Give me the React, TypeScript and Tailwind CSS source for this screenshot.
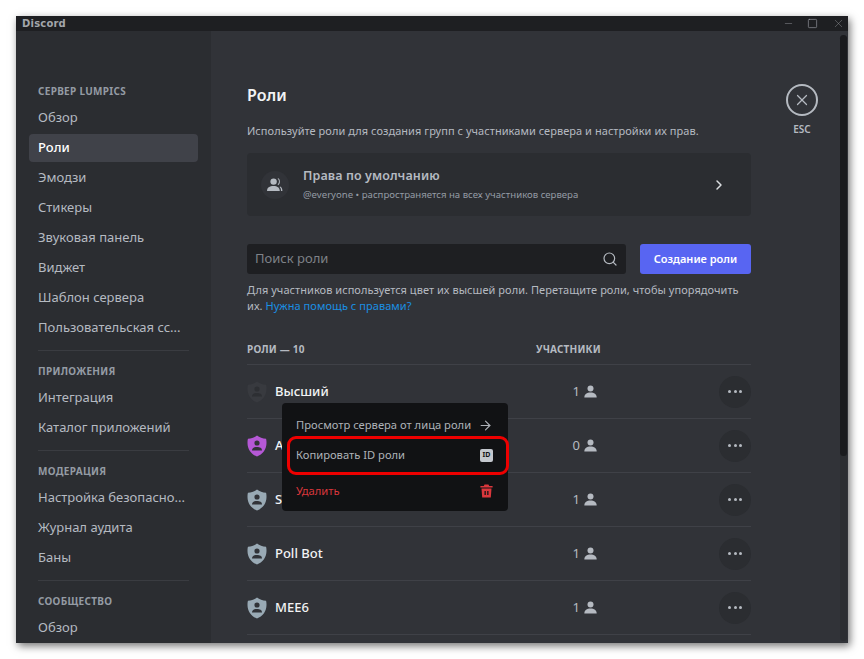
import { ChevronRight, Search, ArrowRight, X, Minus, Square } from 'lucide-react'

const font = { fontFamily: '"Noto Sans", sans-serif' }

const SECTIONS = [
  { title: 'СЕРВЕР LUMPICS', items: ['Обзор', 'Роли', 'Эмодзи', 'Стикеры', 'Звуковая панель', 'Виджет', 'Шаблон сервера', 'Пользовательская сс...'] },
  { title: 'ПРИЛОЖЕНИЯ', items: ['Интеграция', 'Каталог приложений'] },
  { title: 'МОДЕРАЦИЯ', items: ['Настройка безопасно...', 'Журнал аудита', 'Баны'] },
  { title: 'СООБЩЕСТВО', items: ['Обзор'] },
]

const ROLES = [
  { name: 'Высший', count: 1, color: '#383a3f', person: '#2d2f33' },
  { name: 'A', count: 0, color: '#b558d6', person: '#313338' },
  { name: 'S', count: 1, color: '#99aab5', person: '#313338' },
  { name: 'Poll Bot', count: 1, color: '#99aab5', person: '#313338' },
  { name: 'MEE6', count: 1, color: '#99aab5', person: '#313338' },
]

function Shield({ color, person }: { color: string; person: string }) {
  return (
    <svg width="20" height="22" viewBox="0 0 20 22">
      <path d="M10 0.5 C12.5 2.6 15.6 3.6 19 3.8 C19.4 4.6 19.5 6 19.5 8 C19.5 14.5 15.5 19.5 10 21.5 C4.5 19.5 0.5 14.5 0.5 8 C0.5 6 0.6 4.6 1 3.8 C4.4 3.6 7.5 2.6 10 0.5 Z" fill={color} />
      <circle cx="10" cy="8" r="2.6" fill={person} />
      <path d="M5 15.6 C5 12.8 7.2 12 10 12 C12.8 12 15 12.8 15 15.6 Z" fill={person} />
    </svg>
  )
}

function Person() {
  return (
    <svg width="13" height="13" viewBox="0 0 13 13" fill="#b5bac1">
      <circle cx="6.5" cy="3.4" r="3" />
      <path d="M0.3 12.6 C0.4 9.2 2.8 7.6 6.5 7.6 C10.2 7.6 12.6 9.2 12.7 12.6 Z" />
    </svg>
  )
}

function People() {
  return (
    <svg width="16" height="14" viewBox="0 0 16 14" fill="#b5bac1">
      <circle cx="6.6" cy="3.6" r="3.2" />
      <path d="M0 13 C0 9.4 2.6 8 6.6 8 C10.2 8 12.6 9.4 12.8 13 Z" />
      <path d="M10.6 0.8 C12.2 1.6 12.6 5 10.6 6.4 L11.2 7.2 C13.6 5.6 13.4 1.4 11.2 0.2 Z" />
      <path d="M13.2 8.6 C14.8 9.4 15.4 11 15.4 13 L14 13 C14 11 13.6 9.8 12.6 9 Z" />
    </svg>
  )
}

export default function App() {
  return (
    <div className="min-h-[659px] bg-white pt-4 pl-4" style={font}>
      <div className="w-[832px] h-[627px] flex flex-col overflow-hidden bg-[#313338] shadow-[2px_3px_8px_rgba(0,0,0,0.55)] relative">
        {/* title bar */}
        <div className="h-[15px] shrink-0 bg-[#1e1f22] flex items-center justify-between">
          <span className="pl-[6px] text-[10px] leading-none font-bold tracking-[0.2px] text-[#a3a6ab]" style={{ fontFamily: '"DejaVu Sans", sans-serif' }}>Discord</span>
          <div className="flex items-center text-[#9a9da2]">
            <Minus size={11} strokeWidth={1} className="mr-[13px]" />
            <Square size={11} strokeWidth={1.4} className="mr-[14px]" />
            <X size={13} strokeWidth={0.8} className="mr-[3px]" />
          </div>
        </div>

        <div className="flex-1 flex min-h-0">
          {/* sidebar */}
          <div className="w-[195px] shrink-0 bg-[#2b2d31] pl-[13px] pr-[13px] pt-[51px] overflow-hidden">
            {SECTIONS.map((s, i) => (
              <div key={i}>
                {i > 0 && <div className="h-px bg-[#3a3c41] mx-[9px] mt-[8px] mb-[11px]" />}
                <div className="px-[9px] h-[18px] flex items-center text-[10px] font-bold tracking-[0.3px] text-[#949ba4] mb-[4px]">{s.title}</div>
                {s.items.map(item => (
                  <div key={item} className={`h-[28px] mb-[2px] px-[9px] flex items-center rounded text-[13px] whitespace-nowrap ${item === 'Роли' ? 'bg-[#404249] text-white font-medium' : 'text-[#b5bac1]'}`}>
                    {item}
                  </div>
                ))}
              </div>
            ))}
          </div>

          {/* content */}
          <div className="flex-1 min-w-0 pl-[36px] pt-[53px] flex items-start">
            <div className="w-[504px] shrink-0">
              <h1 className="text-[16px] leading-[24px] font-semibold text-[#f2f3f5] -mt-px">Роли</h1>
              <p className="mt-[16px] text-[11px] leading-[16px] text-[#b5bac1] tracking-[0.05px]">Используйте роли для создания групп с участниками сервера и настройки их прав.</p>

              <div className="mt-[14px] h-[63px] rounded bg-[#2b2d31] flex items-center pl-[14px] pr-[24px]">
                <div className="w-[28px] h-[28px] rounded-full bg-[#313338] flex items-center justify-center">
                  <People />
                </div>
                <div className="ml-[14px] flex-1">
                  <div className="text-[12.5px] leading-[16px] font-semibold text-[#b5bac1] tracking-[0.1px]">Права по умолчанию</div>
                  <div className="mt-[4px] text-[9.6px] leading-[14px] text-[#949ba4]">@everyone • распространяется на всех участников сервера</div>
                </div>
                <ChevronRight size={16} strokeWidth={2.2} className="text-[#dbdee1]" />
              </div>

              <div className="mt-[28px] flex gap-[14px]">
                <div className="flex-1 h-[30px] rounded-[3px] bg-[#1e1f22] flex items-center justify-between pl-[8px] pr-[8px]">
                  <span className="text-[13px] text-[#7f8288]">Поиск роли</span>
                  <Search size={16} strokeWidth={1.8} className="text-[#b5bac1]" />
                </div>
                <div className="w-[111px] h-[30px] rounded-[3px] bg-[#5865f2] flex items-center justify-center text-[11px] font-semibold text-white">Создание роли</div>
              </div>

              <p className="mt-[8px] text-[11px] leading-[16px] text-[#b5bac1] tracking-[0.05px]">
                Для участников используется цвет их высшей роли. Перетащите роли, чтобы упорядочить их. <span className="text-[#1a8fe3]">Нужна помощь с правами?</span>
              </p>

              <div className="mt-[28px] h-[15px] flex items-center text-[10px] font-bold tracking-[0.2px] text-[#b5bac1]">
                <span className="w-[289px]">РОЛИ — 10</span>
                <span>УЧАСТНИКИ</span>
              </div>
              <div className="mt-[7px] border-t border-[#3f4147]">
                {ROLES.map(r => (
                  <div key={r.name} className="h-[54px] flex items-center border-b border-[#3f4147]">
                    <Shield color={r.color} person={r.person} />
                    <span className="ml-[8px] w-[280px] text-[13px] font-medium text-[#f2f3f5]">{r.name}</span>
                    <span className="w-[22px] text-right text-[13px] text-[#b5bac1] ml-[3px]">{r.count}</span>
                    <span className="ml-[4px]"><Person /></span>
                    <div className="ml-auto w-[32px] h-[32px] rounded-full bg-[#2b2d31] flex items-center justify-center gap-[2.5px]">
                      <span className="w-[3px] h-[3px] rounded-full bg-[#b5bac1]" />
                      <span className="w-[3px] h-[3px] rounded-full bg-[#b5bac1]" />
                      <span className="w-[3px] h-[3px] rounded-full bg-[#b5bac1]" />
                    </div>
                  </div>
                ))}
              </div>
            </div>

            <div className="ml-[35px] flex flex-col items-center w-[32px]">
              <div className="w-[32px] h-[32px] rounded-full border-2 border-[#b5bac1] flex items-center justify-center">
                <X size={18} strokeWidth={1.6} className="text-[#b5bac1]" />
              </div>
              <span className="mt-[6px] text-[10px] font-semibold text-[#b5bac1]">ESC</span>
            </div>
          </div>
        </div>

        {/* scrollbar */}
        <div className="absolute right-[1px] top-[19px] bottom-[2px] w-[7px] rounded bg-[#2b2d31]">
          <div className="w-full h-[421px] rounded bg-[#1a1b1e]" />
        </div>

        {/* context menu */}
        <div className="absolute left-[266px] top-[387px] w-[226px] h-[108px] rounded bg-[#111214] pl-[14px] pr-[15px] py-[7px] text-[11.2px] text-[#aeb2b8]">
          <div className="h-[30px] flex items-center justify-between">
            <span>Просмотр сервера от лица роли</span>
            <ArrowRight size={15} strokeWidth={1.8} />
          </div>
          <div className="h-[30px] flex items-center justify-between">
            <span>Копировать ID роли</span>
            <span className="w-[13px] h-[13px] rounded-[2px] bg-[#c4c8ce] text-[#111214] text-[7px] font-bold flex items-center justify-center">ID</span>
          </div>
          <div className="mt-[6px] h-[30px] flex items-center justify-between text-[#da373c]">
            <span>Удалить</span>
            <svg width="13" height="14" viewBox="0 0 13 14" fill="#da373c">
              <path d="M4.5 0.5 H8.5 L9.2 2 H12.6 V3.6 H0.4 V2 H3.8 Z" />
              <path d="M1.5 4.6 H11.5 L10.8 13.5 H2.2 Z M4.5 7 V11 H5.8 V7 Z M7.2 7 V11 H8.5 V7 Z" fillRule="evenodd" />
            </svg>
          </div>
        </div>
        <div className="absolute left-[271px] top-[420px] w-[222px] h-[39px] rounded-[9px] border-[3px] border-[#ee0000]" />
      </div>
    </div>
  )
}
